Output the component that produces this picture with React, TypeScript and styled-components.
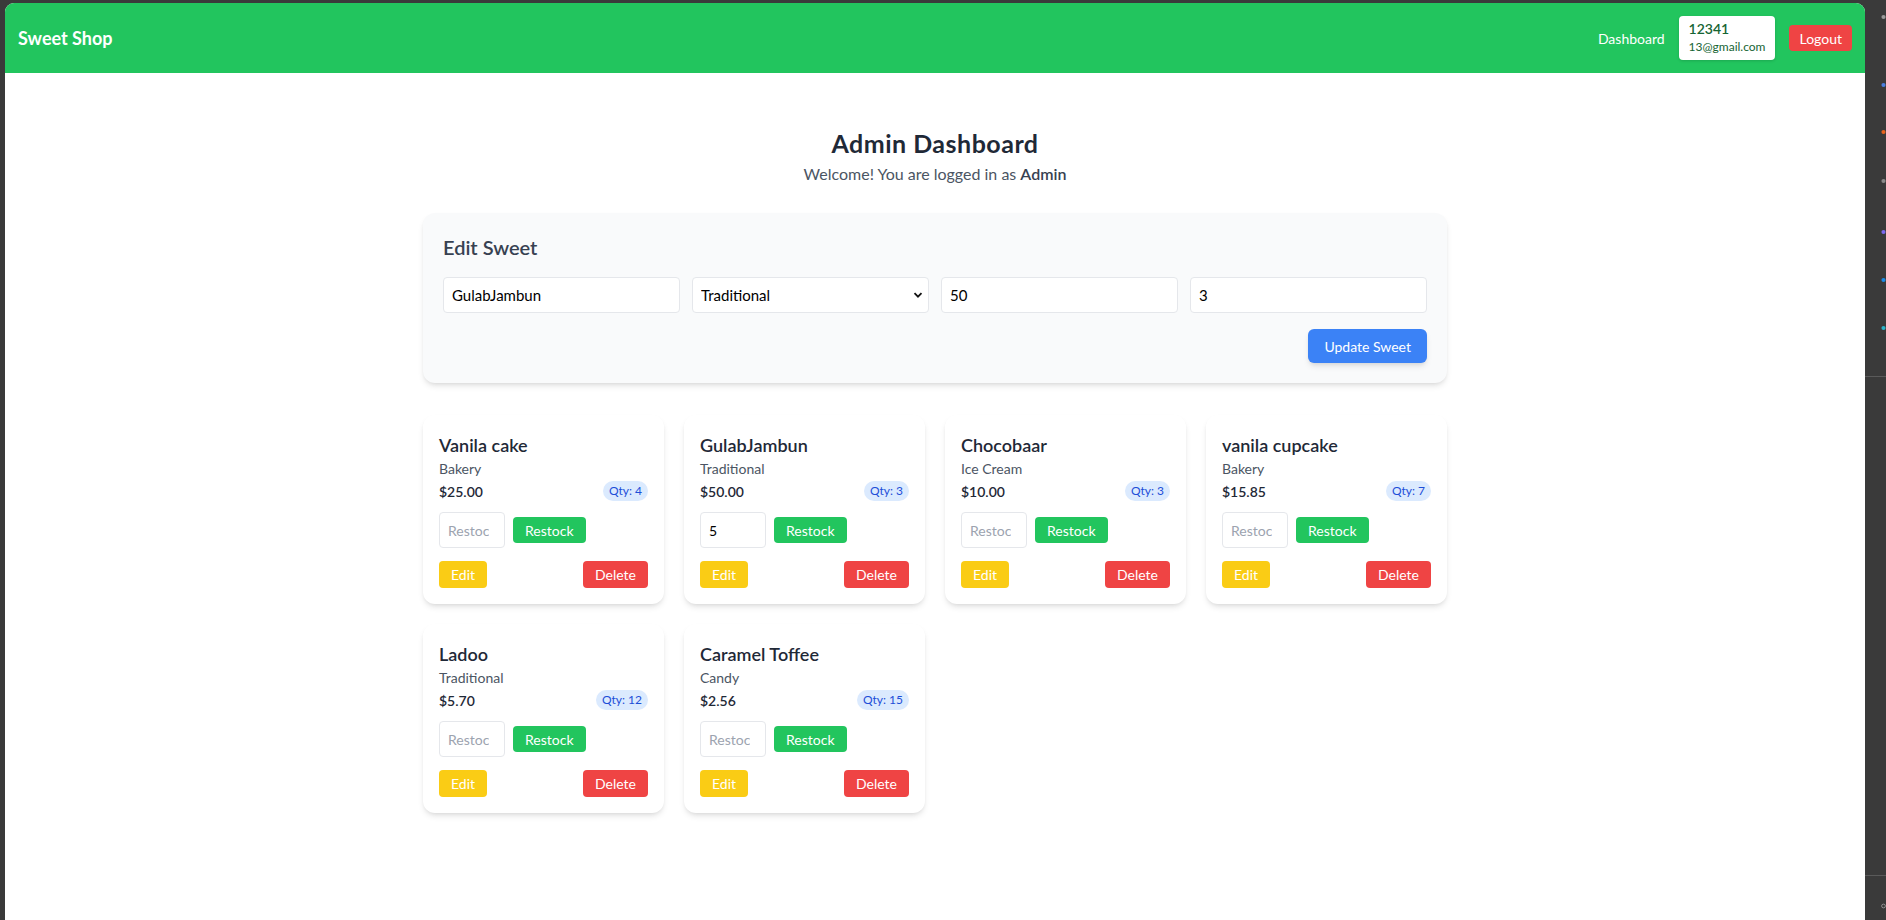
import React from "react";
import styled, { createGlobalStyle } from "styled-components";

const FONT = `"Lato", "Noto Sans", "Liberation Sans", sans-serif`;

const GlobalStyle = createGlobalStyle`
  * { box-sizing: border-box; }
  html, body { margin: 0; padding: 0; }
  body {
    background: #3a3a3a;
    font-family: ${FONT};
    color: #1f2937;
    -webkit-font-smoothing: antialiased;
  }
  input, select, button { font-family: inherit; }
`;

const Frame = styled.div`
  display: flex;
  height: 920px;
  padding: 3px 0 0 5px;
  overflow: hidden;
  background: #3a3a3a;
`;

const Window = styled.div`
  flex: 1;
  display: flex;
  flex-direction: column;
  background: #ffffff;
  border-radius: 9px 9px 0 0;
  overflow: hidden;
`;

const Sidebar = styled.div`
  width: 21px;
  flex: none;
  display: flex;
  flex-direction: column;
  padding-top: 6px;
  overflow: hidden;
`;

const SideIcon = styled.div<{ $gap: number }>`
  height: 16px;
  margin-top: ${(p) => p.$gap}px;
  padding-left: 16px;
  display: flex;
  align-items: center;
  flex: none;
`;

const SideDivider = styled.div<{ $gap: number }>`
  height: 1px;
  margin-top: ${(p) => p.$gap}px;
  width: 21px;
  background: #5a5a5a;
  flex: none;
`;

const Navbar = styled.nav`
  height: 70px;
  flex: none;
  background: #22c55e;
  display: flex;
  align-items: center;
  justify-content: space-between;
  padding: 0 13px;
`;

const Brand = styled.div`
  color: #ffffff;
  font-size: 18px;
  font-weight: 700;
`;

const NavRight = styled.div`
  display: flex;
  align-items: center;
  gap: 14px;
`;

const NavLink = styled.a`
  color: #ffffff;
  font-size: 14px;
  text-decoration: none;
`;

const UserBox = styled.div`
  background: #ffffff;
  border-radius: 4px;
  padding: 4px 10px 5px;
  box-shadow: 0 1px 3px rgba(0, 0, 0, 0.15);
  display: flex;
  flex-direction: column;
  color: #166534;
`;

const UserName = styled.div`
  font-size: 14px;
  font-weight: 600;
  line-height: 18px;
`;

const UserEmail = styled.div`
  font-size: 12px;
  line-height: 17px;
`;

const SmallButton = styled.button<{ $bg: string }>`
  background: ${(p) => p.$bg};
  color: #ffffff;
  border: none;
  border-radius: 4px;
  font-size: 14px;
  height: 26px;
  padding: 0 12px;
  cursor: pointer;
  flex: none;
`;

const LogoutButton = styled(SmallButton)`
  padding: 0 10px;
`;

const Main = styled.main`
  width: 1024px;
  margin: 0 auto;
  padding-top: 54px;
`;

const Title = styled.h1`
  margin: 0;
  text-align: center;
  font-size: 25px;
  letter-spacing: 0.5px;
  line-height: 32px;
  font-weight: 700;
  color: #1f2937;
`;

const Welcome = styled.p`
  margin: 3px 0 0;
  text-align: center;
  font-size: 16px;
  line-height: 24px;
  color: #4b5563;
  strong {
    font-weight: 600;
    color: #374151;
  }
`;

const Panel = styled.section`
  margin-top: 27px;
  background: #f9fafb;
  border-radius: 12px;
  padding: 20px;
  box-shadow: 0 4px 6px -1px rgba(0, 0, 0, 0.1), 0 2px 4px -2px rgba(0, 0, 0, 0.1);
`;

const PanelTitle = styled.h2`
  margin: 0 0 16px;
  font-size: 20px;
  line-height: 28px;
  font-weight: 600;
  color: #374151;
`;

const FieldGrid = styled.div`
  display: grid;
  grid-template-columns: repeat(4, 1fr);
  gap: 12px;
`;

const TextInput = styled.input<{ $size?: number }>`
  width: 100%;
  height: 36px;
  border: 1px solid #e5e7eb;
  border-radius: 4px;
  background: #ffffff;
  padding: 0 8px;
  font-size: ${(p) => p.$size ?? 14}px;
  color: #000000;
  outline: none;
  &::placeholder {
    color: #9ca3af;
  }
  &::-webkit-inner-spin-button,
  &::-webkit-outer-spin-button {
    -webkit-appearance: none;
    margin: 0;
  }
`;

const SelectWrap = styled.div`
  position: relative;
`;

const Select = styled.select`
  width: 100%;
  height: 36px;
  border: 1px solid #e5e7eb;
  border-radius: 4px;
  background: #ffffff;
  padding: 0 8px;
  font-size: 15px;
  color: #000000;
  appearance: none;
  outline: none;
`;

const Chevron = styled.svg`
  position: absolute;
  right: 6px;
  top: 50%;
  margin-top: -5px;
  width: 10px;
  height: 10px;
  pointer-events: none;
`;

const PanelActions = styled.div`
  display: flex;
  justify-content: flex-end;
  margin-top: 16px;
`;

const PrimaryButton = styled.button`
  background: #3b82f6;
  color: #ffffff;
  border: none;
  border-radius: 6px;
  height: 34px;
  padding: 0 16px;
  font-size: 14px;
  box-shadow: 0 4px 6px -1px rgba(0, 0, 0, 0.1), 0 2px 4px -2px rgba(0, 0, 0, 0.1);
  cursor: pointer;
`;

const CardGrid = styled.div`
  margin-top: 32px;
  display: grid;
  grid-template-columns: repeat(4, 1fr);
  gap: 20px;
`;

const Card = styled.div`
  background: #ffffff;
  border-radius: 12px;
  padding: 16px;
  box-shadow: 0 4px 6px -1px rgba(0, 0, 0, 0.1), 0 2px 4px -2px rgba(0, 0, 0, 0.1);
  display: flex;
  flex-direction: column;
`;

const CardTitle = styled.h3`
  margin: 0;
  font-size: 18px;
  line-height: 28px;
  font-weight: 600;
  color: #1f2937;
`;

const Category = styled.div`
  font-size: 14px;
  line-height: 20px;
  color: #4b5563;
`;

const PriceRow = styled.div`
  margin-top: 2px;
  display: flex;
  align-items: center;
  justify-content: space-between;
  height: 20px;
`;

const Price = styled.span`
  font-size: 14px;
  font-weight: 600;
  color: #1f2937;
`;

const Badge = styled.span`
  background: #dbeafe;
  color: #1d4ed8;
  font-size: 12px;
  line-height: 20px;
  padding: 0 6px;
  border-radius: 9999px;
`;

const RestockRow = styled.div`
  margin-top: 11px;
  display: flex;
  align-items: center;
  gap: 8px;
`;

const RestockInput = styled(TextInput)`
  width: 66px;
  padding-right: 15px;
`;

const ActionRow = styled.div`
  margin-top: 13px;
  display: flex;
  align-items: center;
  justify-content: space-between;
`;

const ActionButton = styled(SmallButton)`
  height: 27px;
`;

type Sweet = { name: string; category: string; price: string; qty: number; restock?: string };

const sweets: Sweet[] = [
  { name: "Vanila cake", category: "Bakery", price: "$25.00", qty: 4 },
  { name: "GulabJambun", category: "Traditional", price: "$50.00", qty: 3, restock: "5" },
  { name: "Chocobaar", category: "Ice Cream", price: "$10.00", qty: 3 },
  { name: "vanila cupcake", category: "Bakery", price: "$15.85", qty: 7 },
  { name: "Ladoo", category: "Traditional", price: "$5.70", qty: 12 },
  { name: "Caramel Toffee", category: "Candy", price: "$2.56", qty: 15 },
];

const sideIcons: { gap: number; color: string }[] = [
  { gap: 0, color: "#9a9a9a" },
  { gap: 52, color: "#4a7fe0" },
  { gap: 31, color: "#e8641e" },
  { gap: 33, color: "#8a8a8a" },
  { gap: 35, color: "#7b68ee" },
  { gap: 32, color: "#1a8ae6" },
  { gap: 32, color: "#2bb3c9" },
];

export default function App() {
  return (
    <>
      <GlobalStyle />
      <Frame>
        <Window>
          <Navbar>
            <Brand>Sweet Shop</Brand>
            <NavRight>
              <NavLink href="#">Dashboard</NavLink>
              <UserBox>
                <UserName>12341</UserName>
                <UserEmail>13@gmail.com</UserEmail>
              </UserBox>
              <LogoutButton $bg="#ef4444">Logout</LogoutButton>
            </NavRight>
          </Navbar>
          <Main>
            <Title>Admin Dashboard</Title>
            <Welcome>
              Welcome! You are logged in as <strong>Admin</strong>
            </Welcome>
            <Panel>
              <PanelTitle>Edit Sweet</PanelTitle>
              <FieldGrid>
                <TextInput $size={15} defaultValue="GulabJambun" />
                <SelectWrap>
                  <Select defaultValue="Traditional">
                    <option>Bakery</option>
                    <option>Traditional</option>
                    <option>Ice Cream</option>
                    <option>Candy</option>
                  </Select>
                  <Chevron viewBox="0 0 10 10">
                    <path d="M1.5 3.2 L5 6.7 L8.5 3.2" fill="none" stroke="#111" strokeWidth="1.8" />
                  </Chevron>
                </SelectWrap>
                <TextInput $size={15} type="number" defaultValue="50" />
                <TextInput $size={15} type="number" defaultValue="3" />
              </FieldGrid>
              <PanelActions>
                <PrimaryButton>Update Sweet</PrimaryButton>
              </PanelActions>
            </Panel>
            <CardGrid>
              {sweets.map((s) => (
                <Card key={s.name}>
                  <CardTitle>{s.name}</CardTitle>
                  <Category>{s.category}</Category>
                  <PriceRow>
                    <Price>{s.price}</Price>
                    <Badge>Qty: {s.qty}</Badge>
                  </PriceRow>
                  <RestockRow>
                    <RestockInput type="text" placeholder="Restock" defaultValue={s.restock} />
                    <SmallButton $bg="#22c55e">Restock</SmallButton>
                  </RestockRow>
                  <ActionRow>
                    <ActionButton $bg="#facc15">Edit</ActionButton>
                    <ActionButton $bg="#ef4444">Delete</ActionButton>
                  </ActionRow>
                </Card>
              ))}
            </CardGrid>
          </Main>
        </Window>
        <Sidebar>
          {sideIcons.map((ic, i) => (
            <SideIcon key={i} $gap={ic.gap}>
              <svg width="12" height="12" viewBox="0 0 12 12">
                <circle cx="6" cy="6" r="5" fill={ic.color} />
              </svg>
            </SideIcon>
          ))}
          <SideDivider $gap={40} />
          <SideDivider $gap={498} />
          <SideIcon $gap={22}>
            <svg width="12" height="12" viewBox="0 0 12 12">
              <circle cx="6" cy="6" r="4.5" fill="none" stroke="#bbb" strokeWidth="1.5" />
            </svg>
          </SideIcon>
        </Sidebar>
      </Frame>
    </>
  );
}
